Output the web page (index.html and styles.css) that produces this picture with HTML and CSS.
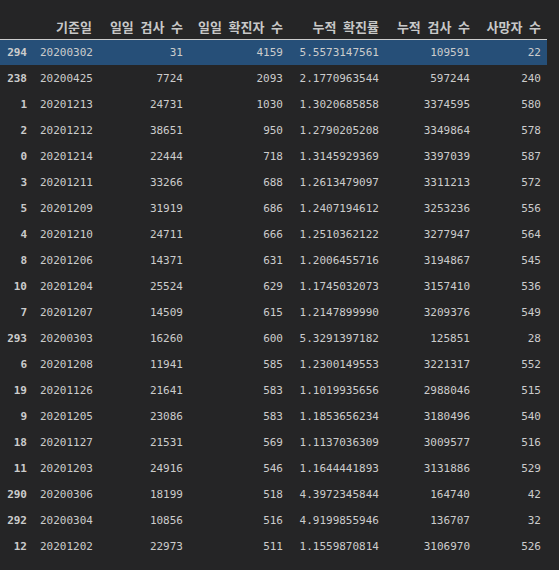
FILE: index.html
```html
<!DOCTYPE html>
<html>
<head>
<meta charset="utf-8">
<link rel="stylesheet" href="styles.css">
</head>
<body>
<table class="df">
<colgroup>
<col class="c0"><col class="c1"><col class="c2"><col class="c3"><col class="c4"><col class="c5"><col class="c6">
</colgroup>
<thead>
<tr><th></th><th>기준일</th><th>일일 검사 수</th><th>일일 확진자 수</th><th>누적 확진률</th><th>누적 검사 수</th><th>사망자 수</th></tr>
</thead>
<tbody>
<tr class="sel"><th>294</th><td>20200302</td><td>31</td><td>4159</td><td>5.5573147561</td><td>109591</td><td>22</td></tr>
<tr><th>238</th><td>20200425</td><td>7724</td><td>2093</td><td>2.1770963544</td><td>597244</td><td>240</td></tr>
<tr><th>1</th><td>20201213</td><td>24731</td><td>1030</td><td>1.3020685858</td><td>3374595</td><td>580</td></tr>
<tr><th>2</th><td>20201212</td><td>38651</td><td>950</td><td>1.2790205208</td><td>3349864</td><td>578</td></tr>
<tr><th>0</th><td>20201214</td><td>22444</td><td>718</td><td>1.3145929369</td><td>3397039</td><td>587</td></tr>
<tr><th>3</th><td>20201211</td><td>33266</td><td>688</td><td>1.2613479097</td><td>3311213</td><td>572</td></tr>
<tr><th>5</th><td>20201209</td><td>31919</td><td>686</td><td>1.2407194612</td><td>3253236</td><td>556</td></tr>
<tr><th>4</th><td>20201210</td><td>24711</td><td>666</td><td>1.2510362122</td><td>3277947</td><td>564</td></tr>
<tr><th>8</th><td>20201206</td><td>14371</td><td>631</td><td>1.2006455716</td><td>3194867</td><td>545</td></tr>
<tr><th>10</th><td>20201204</td><td>25524</td><td>629</td><td>1.1745032073</td><td>3157410</td><td>536</td></tr>
<tr><th>7</th><td>20201207</td><td>14509</td><td>615</td><td>1.2147899990</td><td>3209376</td><td>549</td></tr>
<tr><th>293</th><td>20200303</td><td>16260</td><td>600</td><td>5.3291397182</td><td>125851</td><td>28</td></tr>
<tr><th>6</th><td>20201208</td><td>11941</td><td>585</td><td>1.2300149553</td><td>3221317</td><td>552</td></tr>
<tr><th>19</th><td>20201126</td><td>21641</td><td>583</td><td>1.1019935656</td><td>2988046</td><td>515</td></tr>
<tr><th>9</th><td>20201205</td><td>23086</td><td>583</td><td>1.1853656234</td><td>3180496</td><td>540</td></tr>
<tr><th>18</th><td>20201127</td><td>21531</td><td>569</td><td>1.1137036309</td><td>3009577</td><td>516</td></tr>
<tr><th>11</th><td>20201203</td><td>24916</td><td>546</td><td>1.1644441893</td><td>3131886</td><td>529</td></tr>
<tr><th>290</th><td>20200306</td><td>18199</td><td>518</td><td>4.3972345844</td><td>164740</td><td>42</td></tr>
<tr><th>292</th><td>20200304</td><td>10856</td><td>516</td><td>4.9199855946</td><td>136707</td><td>32</td></tr>
<tr><th>12</th><td>20201202</td><td>22973</td><td>511</td><td>1.1559870814</td><td>3106970</td><td>526</td></tr>
</tbody>
</table>
</body>
</html>
```
FILE: styles.css
```css
html, body {
  margin: 0;
  padding: 0;
  background: #252526;
  height: 100%;
}
body {
  padding-top: 14px;
  box-sizing: border-box;
  font-family: "DejaVu Sans Mono", "Noto Sans CJK KR", monospace;
  font-size: 11px;
  color: #cccccc;
}
.df {
  border-collapse: collapse;
  table-layout: fixed;
  width: 547px;
}
.c0 { width: 33px; }
.c1 { width: 65px; }
.c2 { width: 91px; }
.c3 { width: 100px; }
.c4 { width: 96px; }
.c5 { width: 91px; }
.c6 { width: 71px; }
.df th, .df td {
  height: 26px;
  padding: 0 6px 0 7px;
  text-align: right;
  vertical-align: middle;
  white-space: nowrap;
  box-sizing: border-box;
}
.df th {
  font-weight: bold;
}
.df thead tr {
  border-bottom: 1px solid #cccccc;
}
.df thead th {
  height: 25px;
  font-family: "Noto Sans CJK KR", sans-serif;
  font-size: 13px;
  word-spacing: 3.7px;
  color: #c8c8c8;
}
.df tbody td {
  font-weight: normal;
}
.df tr.sel {
  background: #264f78;
}
```
